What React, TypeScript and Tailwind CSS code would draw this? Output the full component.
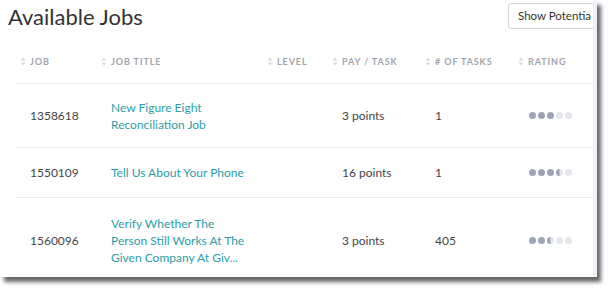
import React from "react";

const SortIcon = () => (
  <svg width="6" height="9" viewBox="0 0 6 9" className="shrink-0">
    <path d="M3 0.5 L5.5 3.5 L0.5 3.5 Z" fill="#d6d9dd" />
    <path d="M3 8.5 L5.5 5.5 L0.5 5.5 Z" fill="#d6d9dd" />
  </svg>
);

type DotKind = "f" | "h" | "e";
const Dot = ({ k }: { k: DotKind }) => (
  <svg width="7" height="7" viewBox="0 0 8 8" className="shrink-0">
    <circle cx="4" cy="4" r="4" fill={k === "f" ? "#9ca4b5" : "#e3e6eb"} />
    {k === "h" && <path d="M4 0 A4 4 0 0 0 4 8 Z" fill="#9ca4b5" />}
  </svg>
);

const Rating = ({ dots }: { dots: DotKind[] }) => (
  <div className="flex gap-[2px]">
    {dots.map((d, i) => (
      <Dot key={i} k={d} />
    ))}
  </div>
);

const cols = ["w-[81px]", "w-[166px]", "w-[65px]", "w-[93px]", "w-[93px]", "flex-1"];

const rows = [
  { id: "1358618", title: ["New Figure Eight", "Reconciliation Job"], pay: "3 points", tasks: "1", dots: ["f", "f", "f", "e", "e"] as DotKind[], h: "h-[64px]" },
  { id: "1550109", title: ["Tell Us About Your Phone"], pay: "16 points", tasks: "1", dots: ["f", "f", "f", "h", "e"] as DotKind[], h: "h-[50px]" },
  { id: "1560096", title: ["Verify Whether The", "Person Still Works At The", "Given Company At Giv..."], pay: "3 points", tasks: "405", dots: ["f", "f", "h", "e", "e"] as DotKind[], h: "h-[84px]" },
];

export default function App() {
  const headers = ["JOB", "JOB TITLE", "LEVEL", "PAY / TASK", "# OF TASKS", "RATING"];
  return (
    <div className="w-[615px] h-[294px] bg-white font-['Lato',sans-serif]">
      <div className="w-[597px] h-[277px] overflow-hidden bg-white border-r-[4px] border-[#eef3f9] shadow-[4px_5px_4px_rgba(0,0,0,0.6)]">
        <div className="flex h-[40px] items-start">
          <h1 className="pl-[8px] pt-[3px] text-[22px] leading-[28px] text-[#333] font-normal">Available Jobs</h1>
          <div className="ml-auto -mr-[15px] mt-[3px] h-[26px] w-[100px] shrink-0 flex items-center pl-[9px] border border-[#d3d3d3] rounded-[3px] text-[11.5px] text-[#333] whitespace-nowrap">
            Show Potentia
          </div>
        </div>
        <div className="ml-[16px]">
          <div className="flex h-[44px] items-center border-b border-[#ebedf0]">
            {headers.map((h, i) => (
              <div key={h} className={`${cols[i]} flex items-center gap-[4px] pl-[4px]`}>
                <SortIcon />
                <span className="text-[9px] font-bold tracking-[0.1em] text-[#a0a5ac]">{h}</span>
              </div>
            ))}
          </div>
          {rows.map((r, ri) => (
            <div key={r.id} className={`flex ${r.h} items-center ${ri < 2 ? "border-b border-[#ebedf0]" : ""} text-[12px] leading-[17px]`}>
              <div className={`${cols[0]} pl-[14px] text-[#444]`}>{r.id}</div>
              <div className={`${cols[1]} pl-[14px] text-[#2b9ea8]`}>
                {r.title.map((t) => (
                  <div key={t}>{t}</div>
                ))}
              </div>
              <div className={`${cols[2]}`}></div>
              <div className={`${cols[3]} pl-[14px] text-[#444]`}>{r.pay}</div>
              <div className={`${cols[4]} pl-[14px] text-[#444]`}>{r.tasks}</div>
              <div className={`${cols[5]} pl-[15px]`}>
                <Rating dots={r.dots} />
              </div>
            </div>
          ))}
        </div>
      </div>
    </div>
  );
}
